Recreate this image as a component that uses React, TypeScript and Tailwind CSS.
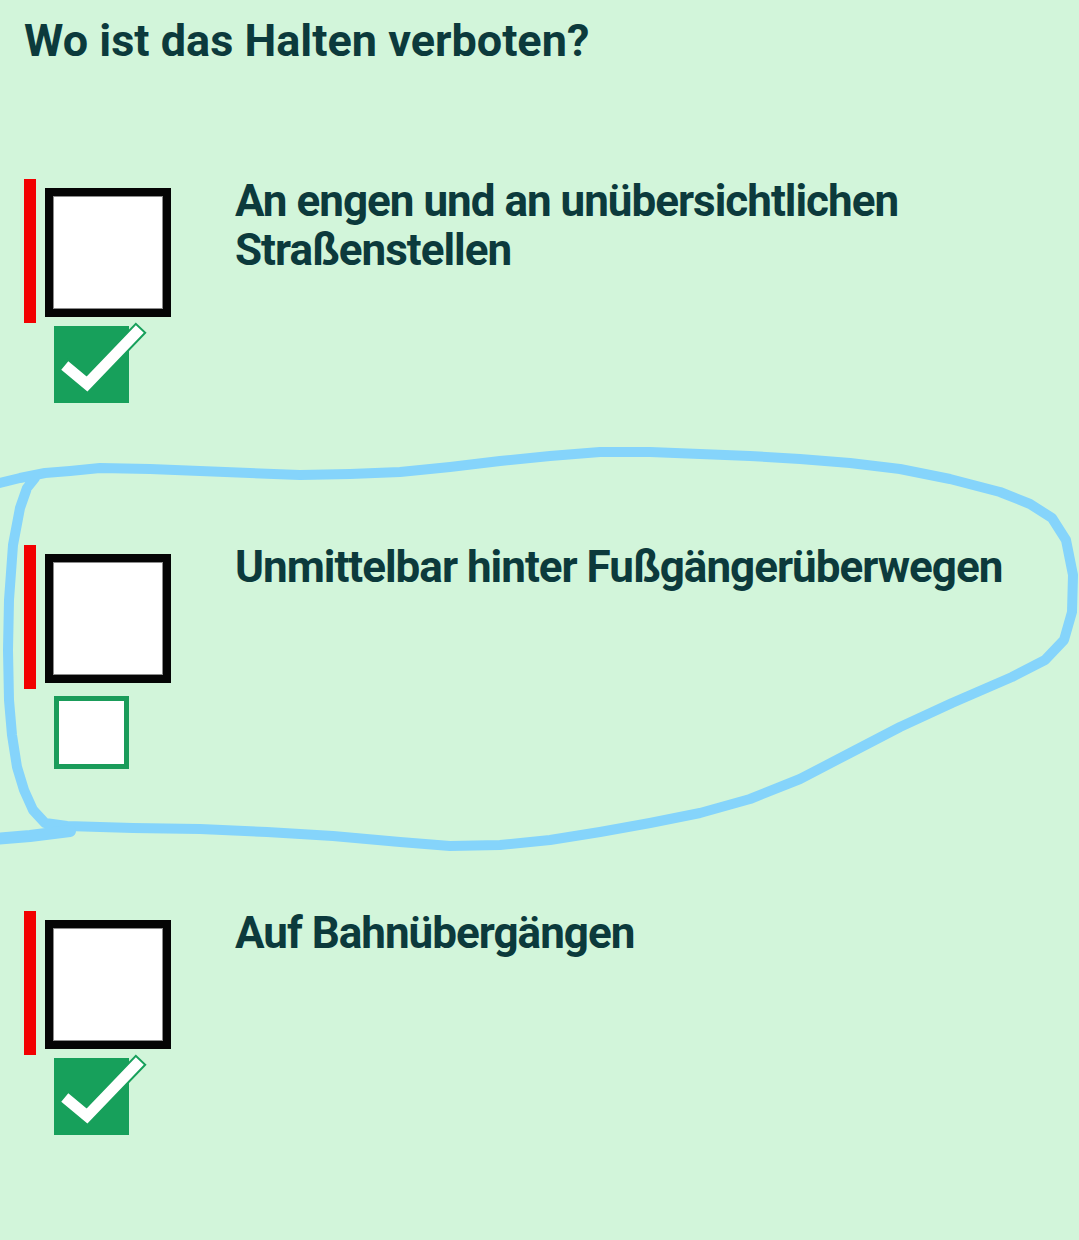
import React from "react";

type Answer = {
  text: string;
  checked: boolean;
};

const answers: Answer[] = [
  { text: "An engen und an unübersichtlichen Straßenstellen", checked: true },
  { text: "Unmittelbar hinter Fußgängerüberwegen", checked: false },
  { text: "Auf Bahnübergängen", checked: true },
];

function CheckIcon() {
  return (
    <svg
      className="absolute left-0 top-0 overflow-visible"
      width="75"
      height="77"
      viewBox="0 0 75 77"
    >
      <polyline
        points="15,43 33,58 82,7"
        fill="none"
        stroke="#17a05b"
        strokeWidth="15"
        strokeLinecap="square"
        strokeLinejoin="miter"
      />
      <polyline
        points="15,43 33,58 82,7"
        fill="none"
        stroke="#ffffff"
        strokeWidth="11"
        strokeLinecap="square"
        strokeLinejoin="miter"
      />
    </svg>
  );
}

function AnswerRow({ answer }: { answer: Answer }) {
  return (
    <div className="flex">
      <div className="flex w-[211px] shrink-0 flex-col">
        <div className="flex items-start gap-[9px]">
          <div className="h-[144px] w-[12px] bg-[#f20000]" />
          <div className="mt-[9px] h-[129px] w-[126px] border-[8px] border-[#050505] bg-white">
            <div className="h-full w-full border border-[#8c8c8c]" />
          </div>
        </div>
        {answer.checked ? (
          <div className="relative ml-[30px] mt-[3px] h-[77px] w-[75px] bg-[#17a05b]">
            <CheckIcon />
          </div>
        ) : (
          <div className="ml-[30px] mt-[7px] h-[73px] w-[75px] border-[5px] border-[#1a9c5a] bg-white" />
        )}
      </div>
      <p className="-mt-[2px] pr-[20px] text-[44px] font-bold leading-[49px] tracking-[-1px] text-[#0c3a3c]">
        {answer.text}
      </p>
    </div>
  );
}

export default function App() {
  return (
    <div
      className="relative min-h-screen w-full overflow-hidden bg-[#d2f5da] pl-[24px]"
      style={{ fontFamily: "Roboto, 'Noto Sans', sans-serif" }}
    >
      <h1 className="pt-[16px] text-[45px] font-bold leading-[49px] text-[#0c3a3c]">
        Wo ist das Halten verboten?
      </h1>
      <div className="mt-[114px] flex flex-col gap-[142px]">
        {answers.map((a) => (
          <AnswerRow key={a.text} answer={a} />
        ))}
      </div>

      {/* hand-drawn highlight around the second answer */}
      <svg
        className="pointer-events-none absolute left-0 top-0"
        width="1079"
        height="1240"
        viewBox="0 0 1079 1240"
      >
        <path
          d="M -5 484 L 20 478 L 45 473 L 70 471 L 100 468 L 150 469 L 200 471 L 250 473 L 300 475 L 350 474 L 400 472 L 450 467 L 500 461 L 550 456 L 600 452 L 650 452 L 700 454 L 750 456 L 800 459 L 850 463 L 900 469 L 950 479 L 1000 492 L 1030 504 L 1052 518 L 1066 540 L 1073 575 L 1072 612 L 1064 640 L 1045 660 L 1012 677 L 952 703 L 900 727 L 850 753 L 800 779 L 750 799 L 700 813 L 650 823 L 600 832 L 550 840 L 500 845 L 450 846 L 400 842 L 333 836 L 267 832 L 200 829 L 133 828 L 67 826 L 45 823 L 33 810 L 24 790 L 17 767 L 12 735 L 9 700 L 8 650 L 9 600 L 13 545 L 20 508 L 27 488 L 35 478"
          fill="none"
          stroke="#85d4fb"
          strokeWidth="10"
          strokeLinecap="round"
          strokeLinejoin="round"
        />
        <path
          d="M -5 839 L 30 836 L 70 831"
          fill="none"
          stroke="#85d4fb"
          strokeWidth="12"
          strokeLinecap="round"
          strokeLinejoin="round"
        />
      </svg>
    </div>
  );
}
